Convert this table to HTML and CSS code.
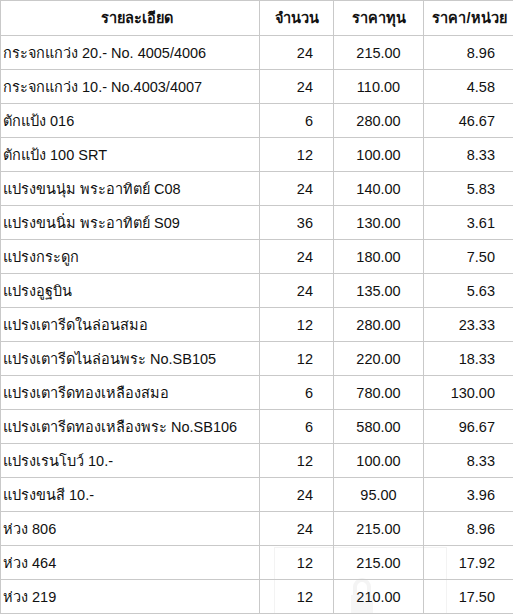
FILE: index.html
```html
<!DOCTYPE html>
<html lang="th">
<head>
<meta charset="utf-8">
<title>รายการสินค้า</title>
<link rel="stylesheet" href="styles.css">
</head>
<body>
<div class="sheet">
<div class="watermark" aria-hidden="true">
<svg class="lock" width="22" height="44" viewBox="0 0 22 44">
<path d="M4 20 V12 a7 7 0 0 1 14 0 V20" fill="none" stroke="#f4f4f4" stroke-width="4"/>
<rect x="0" y="20" width="22" height="24" fill="#f6f6f6"/>
</svg>
</div>
<table class="grid">
<colgroup>
<col class="c-name"><col class="c-qty"><col class="c-cost"><col class="c-unit">
</colgroup>
<thead>
<tr><th class="h-name">รายละเอียด</th><th>จำนวน</th><th>ราคาทุน</th><th>ราคา/หน่วย</th></tr>
</thead>
<tbody>
<tr><td class="name">กระจกแกว่ง 20.- No. 4005/4006</td><td class="qty">24</td><td class="cost">215.00</td><td class="unit">8.96</td></tr>
<tr><td class="name">กระจกแกว่ง 10.- No.4003/4007</td><td class="qty">24</td><td class="cost">110.00</td><td class="unit">4.58</td></tr>
<tr><td class="name">ตักแป้ง 016</td><td class="qty">6</td><td class="cost">280.00</td><td class="unit">46.67</td></tr>
<tr><td class="name">ตักแป้ง 100 SRT</td><td class="qty">12</td><td class="cost">100.00</td><td class="unit">8.33</td></tr>
<tr><td class="name">แปรงขนนุ่ม พระอาทิตย์ C08</td><td class="qty">24</td><td class="cost">140.00</td><td class="unit">5.83</td></tr>
<tr><td class="name">แปรงขนนิ่ม พระอาทิตย์ S09</td><td class="qty">36</td><td class="cost">130.00</td><td class="unit">3.61</td></tr>
<tr><td class="name">แปรงกระดูก</td><td class="qty">24</td><td class="cost">180.00</td><td class="unit">7.50</td></tr>
<tr><td class="name">แปรงอูฐบิน</td><td class="qty">24</td><td class="cost">135.00</td><td class="unit">5.63</td></tr>
<tr><td class="name">แปรงเตารีดในล่อนสมอ</td><td class="qty">12</td><td class="cost">280.00</td><td class="unit">23.33</td></tr>
<tr><td class="name">แปรงเตารีดไนล่อนพระ No.SB105</td><td class="qty">12</td><td class="cost">220.00</td><td class="unit">18.33</td></tr>
<tr><td class="name">แปรงเตารีดทองเหลืองสมอ</td><td class="qty">6</td><td class="cost">780.00</td><td class="unit">130.00</td></tr>
<tr><td class="name">แปรงเตารีดทองเหลืองพระ No.SB106</td><td class="qty">6</td><td class="cost">580.00</td><td class="unit">96.67</td></tr>
<tr><td class="name">แปรงเรนโบว์ 10.-</td><td class="qty">12</td><td class="cost">100.00</td><td class="unit">8.33</td></tr>
<tr><td class="name">แปรงขนสี 10.-</td><td class="qty">24</td><td class="cost">95.00</td><td class="unit">3.96</td></tr>
<tr><td class="name">ห่วง 806</td><td class="qty">24</td><td class="cost">215.00</td><td class="unit">8.96</td></tr>
<tr><td class="name">ห่วง 464</td><td class="qty">12</td><td class="cost">215.00</td><td class="unit">17.92</td></tr>
<tr><td class="name">ห่วง 219</td><td class="qty">12</td><td class="cost">210.00</td><td class="unit">17.50</td></tr>
</tbody>
</table>
</div>
</body>
</html>
```

FILE: styles.css
```css
html, body {
  margin: 0;
  padding: 0;
  background: #ffffff;
}

body {
  font-family: "Liberation Sans", "Noto Sans", sans-serif;
  font-size: 14.5px;
  color: #111111;
  overflow: hidden;
}

.sheet {
  position: relative;
  width: 515px;
}

.grid {
  position: relative;
  z-index: 1;
  border-collapse: collapse;
  table-layout: fixed;
  width: 515px;
  background: transparent;
}

.c-name { width: 259px; }
.c-qty { width: 74px; }
.c-cost { width: 90px; }
.c-unit { width: 92px; }

.grid th,
.grid td {
  border: 1px solid #c9c9c9;
  padding: 0;
  height: 33px;
  white-space: nowrap;
  overflow: hidden;
  line-height: 20px;
  vertical-align: middle;
}

.grid thead th {
  height: 34px;
  font-weight: bold;
  text-align: center;
}

.grid th.h-name {
  padding-left: 13px;
}

.name {
  padding-left: 2px !important;
  text-align: left;
}

.qty {
  text-align: right;
  padding-right: 20px !important;
}

.cost {
  text-align: center;
}

.unit {
  text-align: right;
  padding-right: 20px !important;
}

.watermark {
  position: absolute;
  z-index: 0;
  left: 274px;
  top: 547px;
  width: 171px;
  height: 80px;
  border: 1px solid #f3f3f3;
  pointer-events: none;
}

.lock {
  position: absolute;
  left: 76px;
  top: 27px;
}
```
